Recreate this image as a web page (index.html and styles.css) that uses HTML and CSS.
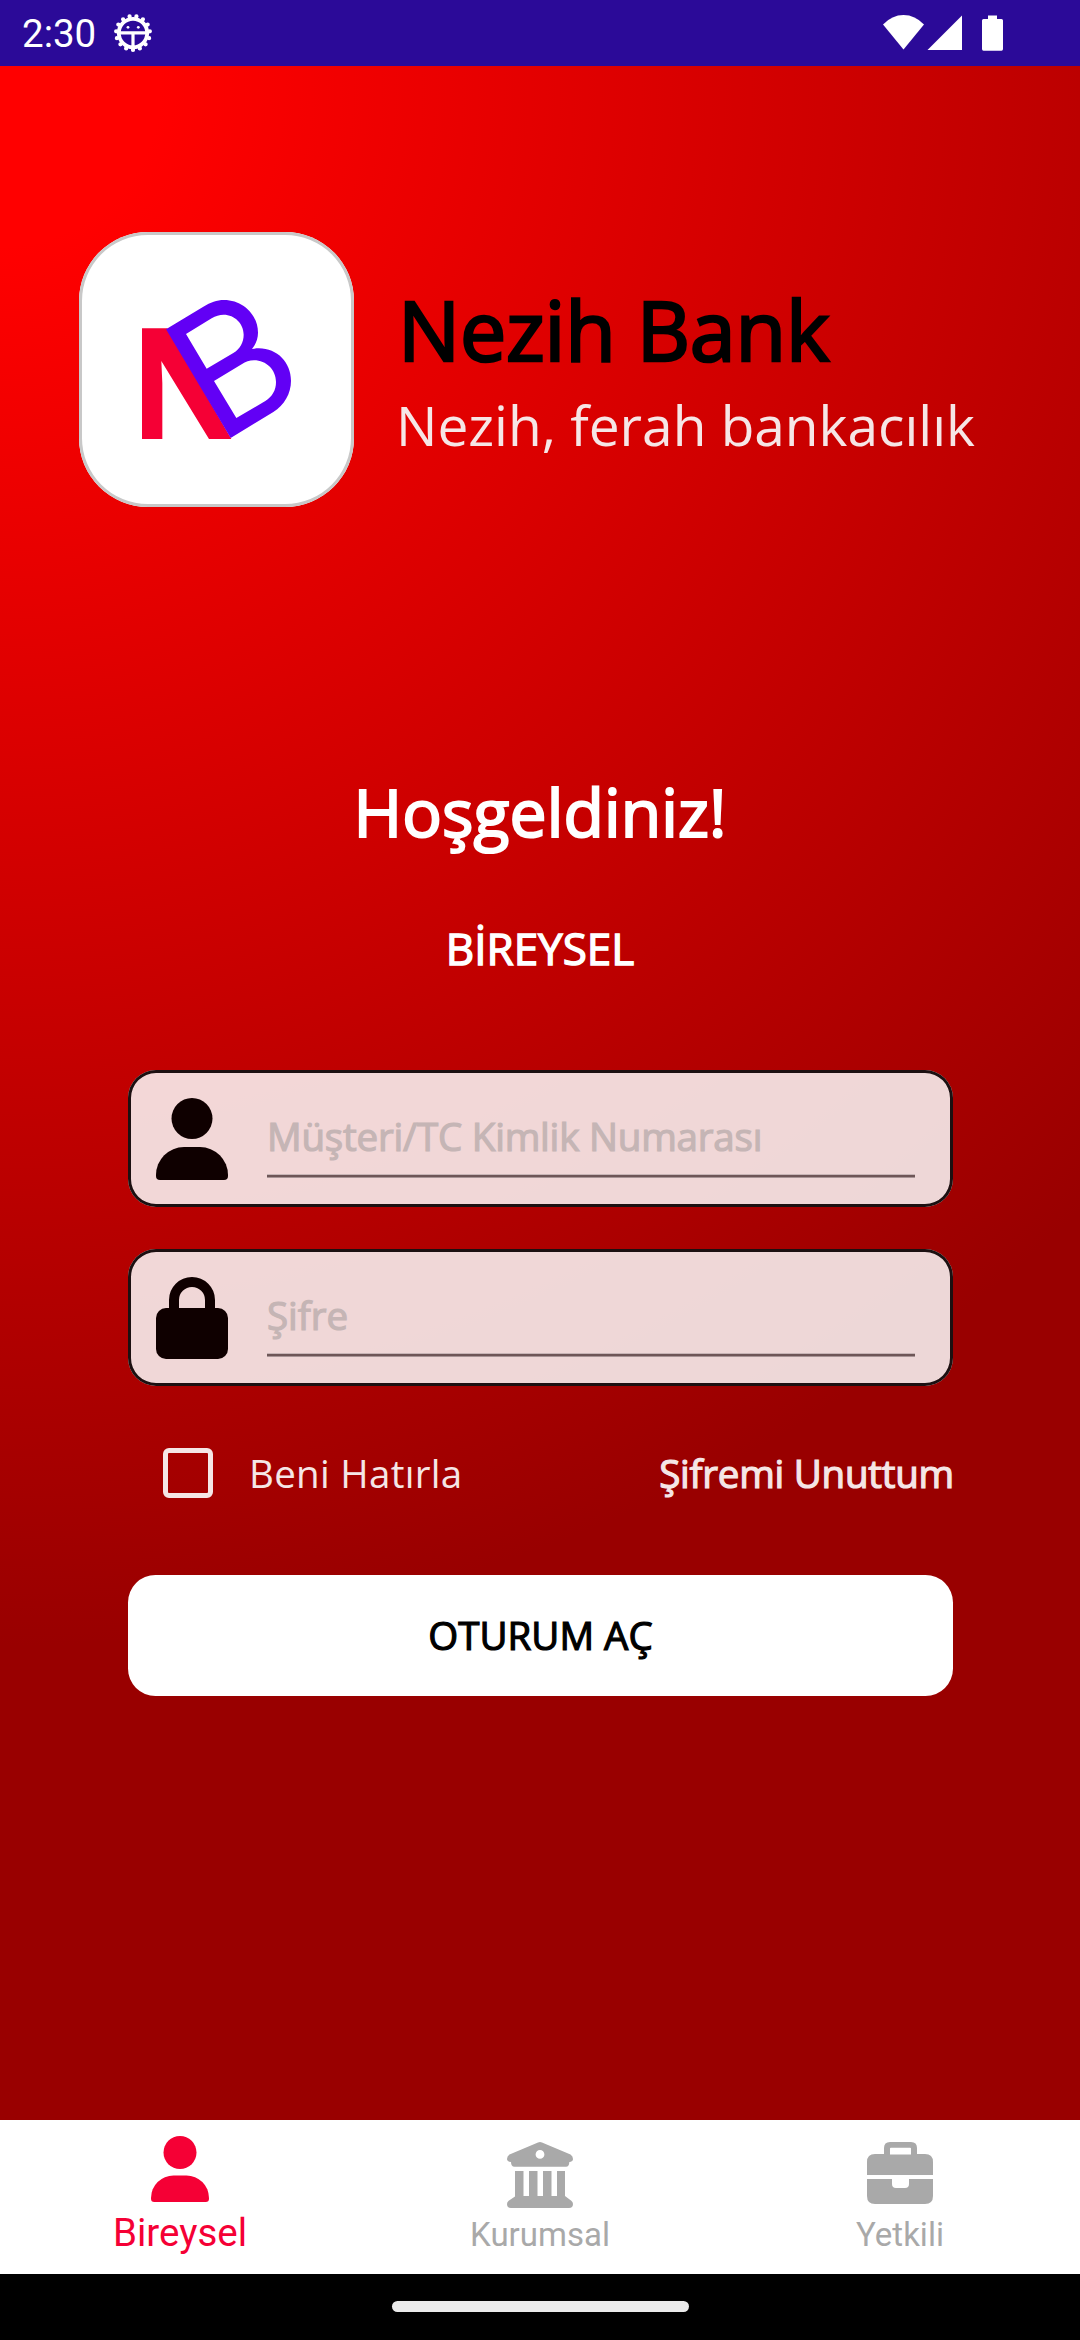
FILE: index.html
```html
<!DOCTYPE html>
<html lang="tr">
<head>
<meta charset="utf-8">
<title>Nezih Bank</title>
<link rel="stylesheet" href="styles.css">
</head>
<body>
<div class="screen">
  <header class="status">
    <span class="clock">2:30</span>
    <svg class="debug" width="40" height="40" viewBox="0 0 40 40" fill="none" stroke="#fff">
      <circle cx="20" cy="20" r="14.200" stroke-width="3.800"/>
      <circle cx="20" cy="20" r="16.900" stroke-width="4.300" stroke-linecap="round" pathLength="15" stroke-dasharray="0 1" transform="rotate(90 20 20)"/>
      <path d="M7 19.8H33M20 20V34" stroke-width="3.200"/>
      <circle cx="15" cy="14.300" r="1.400" fill="#fff" stroke="none"/>
      <circle cx="25.300" cy="14.300" r="1.400" fill="#fff" stroke="none"/>
    </svg>
    <svg class="signals" width="121" height="37" viewBox="0 0 121 37" fill="#fff">
      <path d="M0 9.500Q9 0 20.500 0T41 9.500L20.500 34.500Z"/>
      <path d="M79 .5V35H44.500Z"/>
      <path d="M105 .5H114V4H118.500Q120 4 120 5.500V34Q120 35.700 118.500 35.700H100.500Q99 35.700 99 34V5.500Q99 4 100.500 4H105Z"/>
    </svg>
  </header>

  <main class="login">
    <section class="brand">
      <div class="logo">
        <svg width="275" height="275" viewBox="57 66 825 825">
          <path fill="#f50035" d="M246 355H322L514 687H447L304 453L307 520V687H246Z"/>
          <path fill="#6200f5" fill-rule="evenodd" d="M318 358L430 290C452 277 470 270 492 270C548 270 594 314 594 368C594 386 588 402 576 417C642 405 693 452 693 512C693 550 673 585 640 606L512 684ZM378 372L440 476L520 429C540 417 551 396 551 374C551 341 524 314 491 314C478 314 467 318 455 325ZM462 513L529 624L616 573C637 560 648 540 648 516C648 480 619 451 582 451C568 451 557 455 545 463Z"/>
        </svg>
      </div>
      <div class="brand-text">
        <h1 class="name">Nezih Bank</h1>
        <p class="slogan">Nezih, ferah bankacılık</p>
      </div>
    </section>

    <h2 class="welcome">Hoşgeldiniz!</h2>
    <h3 class="segment">BİREYSEL</h3>

    <form class="form">
      <label class="field">
        <svg width="72" height="82" viewBox="0 0 72 82" fill="#0f0000">
          <circle cx="36" cy="20.500" r="20.500"/>
          <path d="M28 49H44A28 28 0 0 1 72 77V78Q72 82 68 82H4Q0 82 0 78V77A28 28 0 0 1 28 49Z"/>
        </svg>
        <span class="input customer">Müşteri/TC Kimlik Numarası</span>
      </label>
      <label class="field">
        <svg width="72" height="82" viewBox="0 0 72 82" fill="#0f0000">
          <rect y="31" width="72" height="51" rx="10"/>
          <path d="M18 34V23A18 18 0 0 1 54 23V34" fill="none" stroke="#0f0000" stroke-width="10"/>
        </svg>
        <span class="input">Şifre</span>
      </label>
      <div class="options">
        <span class="box"></span>
        <span class="remember">Beni Hatırla</span>
        <span class="forgot">Şifremi Unuttum</span>
      </div>
      <button class="submit" type="button">OTURUM AÇ</button>
    </form>
  </main>

  <nav class="tabs">
    <a class="tab active">
      <svg width="58" height="66" viewBox="0 0 72 82" fill="#f50035">
        <circle cx="36" cy="20.500" r="20.500"/>
        <path d="M28 49H44A28 28 0 0 1 72 77V78Q72 82 68 82H4Q0 82 0 78V77A28 28 0 0 1 28 49Z"/>
      </svg>
      <span>Bireysel</span>
    </a>
    <a class="tab">
      <svg width="66" height="66" viewBox="0 0 66 66" fill="#a9a9a9">
        <path fill-rule="evenodd" d="M31 .5Q33-.4 35 .5L63.500 12.500Q66 14 66 17Q66 19.500 62.300 20Q62.300 24.700 59 24.700H7.500Q4 24.700 4 20Q0 19.500 0 17Q0 14 2.500 12.500ZM33 8A4.400 4.400 0 1 0 33 16.800A4.400 4.400 0 1 0 33 8Z"/>
        <path d="M8 29H16.500V54H22V29H30.500V54H36V29H44.500V54H50V29H58V54L64.300 58.700Q66 60 66 62Q66 66 62 66H4Q0 66 0 62Q0 60 1.700 58.700L8 54.500Z"/>
      </svg>
      <span>Kurumsal</span>
    </a>
    <a class="tab">
      <svg width="66" height="66" viewBox="0 0 66 66" fill="#a9a9a9">
        <path fill-rule="evenodd" d="M17 12V6Q17 0 23 0H44Q50 0 50 6V12H58Q66 12 66 20V33H0V20Q0 12 8 12ZM23 12.500H44V6.500Q44 5.700 43.200 5.700H23.800Q23 5.700 23 6.500Z"/>
        <path d="M0 37H25V42Q25 46 29 46H38Q42 46 42 42V37H66V54Q66 62 58 62H8Q0 62 0 54Z"/>
      </svg>
      <span>Yetkili</span>
    </a>
  </nav>
  <footer class="gesture"><span class="pill"></span></footer>
</div>
</body>
</html>
```
FILE: styles.css
```css
* { box-sizing: border-box; margin: 0; padding: 0; }

body {
  background: #000;
  font-family: "Open Sans", "Noto Sans", sans-serif;
  font-weight: 400;
}

.screen {
  width: 1080px;
  height: 2340px;
  display: flex;
  flex-direction: column;
  overflow: hidden;
}

.status {
  height: 66px;
  flex: none;
  display: flex;
  align-items: flex-start;
  background: #2b0a98;
  color: #fff;
}

.clock {
  width: 91px;
  padding: 11px 0 0 22px;
  font: 400 38.5px/46px Roboto, sans-serif;
}

.debug { margin: 13px 0 0 22px; }
.signals { margin: 15px 76px 0 auto; }

.login {
  flex: none;
  height: 2054px;
  padding: 166px 0 0;
  background: radial-gradient(circle at 0 20px, #f00 160px, #900 1560px);
}

.brand {
  display: flex;
  gap: 42px;
  padding-left: 79px;
  height: 275px;
}

.logo {
  width: 275px;
  height: 275px;
  border-radius: 69px;
  background: #fff;
  box-shadow: inset 0 0 0 3px #c8c8c8;
}

.logo svg { display: block; }

.brand-text { padding-top: 41px; white-space: nowrap; }

.name {
  padding-left: 2px;
  font-size: 82.5px;
  line-height: 112px;
  font-weight: 400;
  letter-spacing: -.2px;
  color: #000;
  -webkit-text-stroke: 2.6px #000;
}

.slogan {
  margin-top: 2px;
  font-size: 55px;
  line-height: 75px;
  color: #f6e6e6;
}

.welcome,
.segment {
  color: #fff;
  font-weight: 400;
  text-align: center;
}

.welcome {
  margin-top: 259px;
  font-size: 66px;
  line-height: 90px;
  letter-spacing: .1px;
  -webkit-text-stroke: 2.1px #fff;
}

.segment {
  margin-top: 62px;
  font-size: 44px;
  line-height: 60px;
  -webkit-text-stroke: 1.4px #fff;
}

.form {
  display: flex;
  flex-direction: column;
  margin: 92px 127px 0 128px;
}

.field {
  display: flex;
  height: 137px;
  margin-bottom: 42px;
  padding: 28px 38px 0 28px;
  border-radius: 28px;
  background: rgba(251, 253, 253, .85);
  box-shadow: inset 0 0 0 3px #1c1011;
}

.field svg { flex: none; }

.input {
  flex: 1;
  height: 80px;
  margin-left: 39px;
  padding-top: 12px;
  font-size: 38.5px;
  line-height: 52px;
  color: #c5b5b5;
  -webkit-text-stroke: 1.2px #c5b5b5;
  background: linear-gradient(#c8b5b6 1px, #6e5657 1px 3px, #a89495 3px) bottom / 100% 4px no-repeat;
}

.customer { letter-spacing: -.2px; }

.options {
  display: flex;
  align-items: center;
  height: 52px;
  margin-top: 19px;
  padding-left: 35px;
  font-size: 38.5px;
  line-height: 52px;
  color: #f5e6e6;
}

.box {
  width: 50px;
  height: 50px;
  border: 5.5px solid #f5e6e6;
  border-radius: 6px;
}

.remember {
  margin-left: 36px;
  letter-spacing: .3px;
}

.forgot {
  margin: 0 -1px 1px auto;
  letter-spacing: -.25px;
  -webkit-text-stroke: 1.2px #f5e6e6;
}

.submit {
  height: 121px;
  margin-top: 76px;
  padding-bottom: 2px;
  border: 0;
  border-radius: 27.5px;
  background: #fff;
  color: #000;
  font: 400 38.5px/52px "Open Sans", "Noto Sans", sans-serif;
  -webkit-text-stroke: 1.2px #000;
}

.tabs {
  flex: none;
  height: 154px;
  display: grid;
  grid-template-columns: repeat(3, 1fr);
  background: #fff;
}

.tab {
  display: flex;
  flex-direction: column;
  align-items: center;
  padding-top: 22px;
  color: #a9a9a9;
  font: 400 33px/40px Roboto, sans-serif;
}

.tab span { margin-top: 7px; }

.tab.active {
  padding-top: 16px;
  color: #f50035;
  font-size: 38.5px;
  line-height: 46px;
}

.tab.active span { margin-top: 8px; }

.gesture {
  flex: 1;
  display: flex;
  justify-content: center;
  padding-top: 27px;
  background: #000;
}

.pill {
  width: 297px;
  height: 11px;
  border-radius: 6px;
  background: #ebebeb;
}
```
